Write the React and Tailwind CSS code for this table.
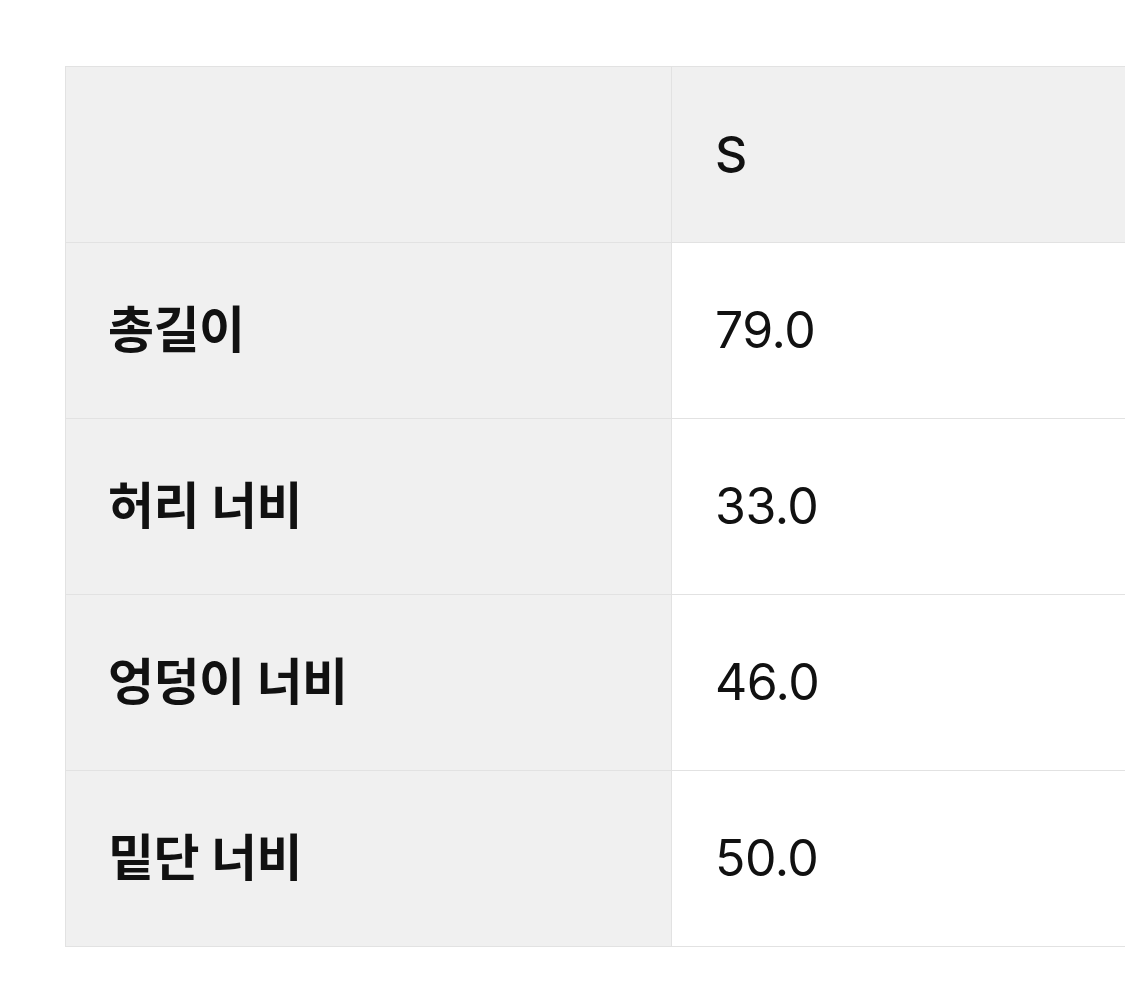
import React from 'react';

const rows = [
    { label: '총길이', value: '79.0' },
    { label: '허리 너비', value: '33.0' },
    { label: '엉덩이 너비', value: '46.0' },
    { label: '밑단 너비', value: '50.0' },
];

const App = () => {
    return (
        <div
            className="w-[1125px] h-[994px] overflow-hidden bg-white pt-[66px] pl-[65px]"
            style={{ fontFamily: 'Inter, "Noto Sans CJK KR", sans-serif' }}
        >
            <div className="w-[1100px] grid grid-cols-[606px_1fr] border-t border-l border-[#e2e2e2] text-[#111]">
                <div className="h-[176px] bg-[#f0f0f0] border-r border-b border-[#e2e2e2]" />
                <div className="h-[176px] bg-[#f0f0f0] border-r border-b border-[#e2e2e2] flex items-center pl-[43px] text-[50px] font-medium">
                    S
                </div>
                {rows.map((row) => (
                    <React.Fragment key={row.label}>
                        <div className="h-[176px] bg-[#f0f0f0] border-r border-b border-[#e2e2e2] flex items-center pl-[42px] text-[50px] font-semibold tracking-[-0.5px]">
                            {row.label}
                        </div>
                        <div className="h-[176px] bg-white border-r border-b border-[#e2e2e2] flex items-center pl-[43px] text-[50px] tracking-[-0.5px]">
                            {row.value}
                        </div>
                    </React.Fragment>
                ))}
            </div>
        </div>
    );
};

export default App;
